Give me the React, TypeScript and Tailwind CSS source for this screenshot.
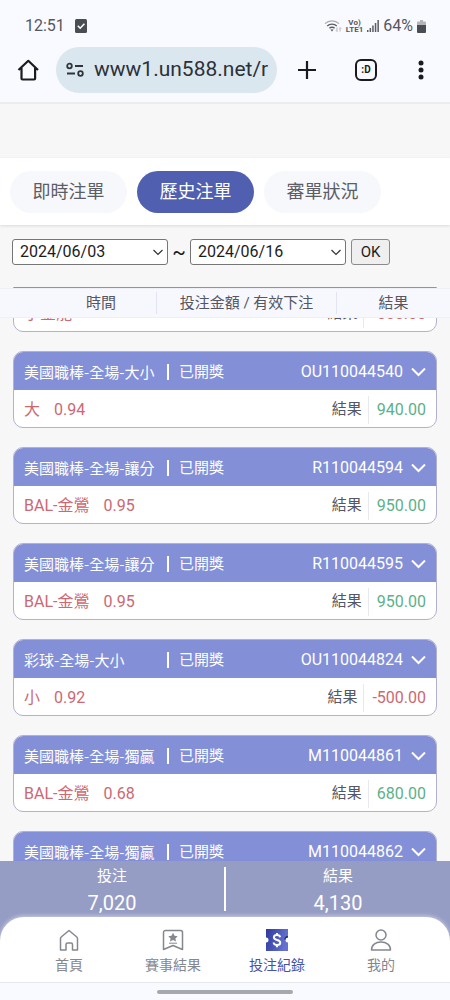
import { ReactNode, useState } from "react";

type Bet = { id: string; market: string; pick: string; odds: string; result: string };

const BETS: Bet[] = [
  { id: "R110044539", market: "美國職棒-全場-讓分", pick: "小金龍", odds: "", result: "-500.00" },
  { id: "OU110044540", market: "美國職棒-全場-大小", pick: "大", odds: "0.94", result: "940.00" },
  { id: "R110044594", market: "美國職棒-全場-讓分", pick: "BAL-金鶯", odds: "0.95", result: "950.00" },
  { id: "R110044595", market: "美國職棒-全場-讓分", pick: "BAL-金鶯", odds: "0.95", result: "950.00" },
  { id: "OU110044824", market: "彩球-全場-大小", pick: "小", odds: "0.92", result: "-500.00" },
  { id: "M110044861", market: "美國職棒-全場-獨贏", pick: "BAL-金鶯", odds: "0.68", result: "680.00" },
  { id: "M110044862", market: "美國職棒-全場-獨贏", pick: "BAL-金鶯", odds: "0.68", result: "680.00" },
];

const TABS = ["即時注單", "歷史注單", "審單狀況"];

export default function App() {
  return (
    <div className="h-screen flex flex-col overflow-hidden bg-[#f7f7f8] font-[Roboto,'Noto_Sans_CJK_TC',sans-serif] text-[#555762]">
      <header className="shrink-0 bg-[#f8faff] border-b-2 border-[#ececef]">
        <StatusBar />
        <BrowserBar />
      </header>
      <Tabs />
      <DateFilter />
      <BetList />
      <Summary />
      <BottomNav />
      <div className="shrink-0 h-[18px] flex items-center justify-center bg-[#f8faff] border-t border-[#e4e5ea]">
        <span className="w-[136px] h-1 rounded-full bg-[#a5a8ad]" />
      </div>
    </div>
  );
}

function StatusBar() {
  return (
    <div className="h-[46px] pt-1.5 pl-[25px] pr-6 flex items-center justify-between text-base text-[#55585e]">
      <div className="flex items-center gap-2.5">
        <span>12:51</span>
        <svg width="12" height="14" viewBox="0 0 12 14">
          <rect width="12" height="14" rx="1.5" fill="#4b4d55" />
          <path d="M2.8 6.8l2.4 2.4 4.2-4.4" fill="none" stroke="#fff" strokeWidth="1.6" />
        </svg>
      </div>
      <div className="flex items-center gap-1">
        <svg width="18" height="14" viewBox="0 0 18 14" fill="none" stroke="#5b5d63" strokeWidth="1.3">
          <path d="M1 4.6C4.8 1 11.2 1 15 4.6" stroke="#aaacb0" />
          <path d="M3.2 7c2.6-2.5 7-2.5 9.6 0M5.4 9.3c1.4-1.4 3.8-1.4 5.2 0" />
          <path d="M6.5 10.8L8 12.5l1.500-1.700C8.600 10 7.400 10 6.500 10.800z" fill="#5b5d63" stroke="none" />
          <path d="M13 8.500v4M11.800 11.300l1.200 1.200M16 12.500v-4M17.200 9.700L16 8.500" stroke="#b4b6ba" strokeWidth="1" />
        </svg>
        <span className="flex flex-col items-center text-[8px] leading-[7px] font-bold"><span>Vo)</span><span>LTE1</span></span>
        <svg width="12" height="12" viewBox="0 0 12 12" fill="#5b5d63">
          <path d="M0 10h1.500v2H0zM2.600 8h1.500v4H2.600zM5.200 5.500h1.500V12H5.200zM7.800 3h1.500v9H7.800zM10.400 0h1.500v12h-1.500z" />
        </svg>
        <span>64%</span>
        <svg width="9" height="13" viewBox="0 0 9 13">
          <path d="M3 0h3v1.500h2a1 1 0 011 1V6H0V2.500a1 1 0 011-1h2z" fill="#b3b5b9" />
          <path d="M0 5h9v7a1 1 0 01-1 1H1a1 1 0 01-1-1z" fill="#4b4d55" />
        </svg>
      </div>
    </div>
  );
}

function BrowserBar() {
  return (
    <div className="h-14 pb-2 pl-4 pr-[19px] flex items-center text-[#191b20]">
      <button aria-label="Home" className="w-6 mr-4">
        <svg width="24" height="24" viewBox="0 0 24 24" fill="none" stroke="currentColor" strokeWidth="2.2" strokeLinejoin="round">
          <path d="M2.500 12L12.300 2.800 22 12M5.500 10v10.500a1 1 0 001 1h11.600a1 1 0 001-1V10" />
        </svg>
      </button>
      <label className="flex-1 min-w-0 h-[46px] pl-2.5 pr-1.5 flex items-center gap-2.5 rounded-full bg-[#dae7ef]">
        <svg className="shrink-0" width="18" height="16" viewBox="0 0 18 16" fill="none" stroke="#30343a" strokeWidth="1.8">
          <circle cx="3.500" cy="4" r="2.300" />
          <path d="M9 4h8M1 11.500h8" />
          <circle cx="14.500" cy="11.500" r="2.300" />
        </svg>
        <input aria-label="Address" defaultValue="www1.un588.net/r" className="min-w-0 w-full text-[21px] outline-none text-[#2c3138] bg-transparent" />
      </label>
      <button aria-label="New tab" className="ml-5">
        <svg width="20" height="20" viewBox="0 0 20 20" stroke="currentColor" strokeWidth="2.2"><path d="M10 1v18M1 10h18" /></svg>
      </button>
      <button className="ml-[38px] w-[22px] h-[22px] rounded-[6px] border-2 border-current text-[10px] leading-none font-bold">:D</button>
      <button aria-label="Menu" className="ml-[34px] w-5 flex justify-center">
        <svg width="6" height="20" viewBox="0 0 6 20" fill="currentColor"><circle cx="3" cy="3" r="2.500" /><circle cx="3" cy="10" r="2.500" /><circle cx="3" cy="17" r="2.500" /></svg>
      </button>
    </div>
  );
}

function Tabs() {
  const [active, setActive] = useState(1);
  return (
    <nav className="shrink-0 mt-[54px] h-[67px] px-2.5 flex items-center gap-2.5 bg-white shadow-[0_1px_3px_rgba(0,0,0,0.12)]">
      {TABS.map((t, i) => (
        <button key={t} onClick={() => setActive(i)} className={`h-[42px] w-[117px] rounded-full text-lg ${i === active ? "bg-[#505fb0] text-white" : "bg-[#f7f8fc] text-[#5c5e66]"}`}>{t}</button>
      ))}
    </nav>
  );
}

function DateFilter() {
  return (
    <div className="shrink-0 mt-3.5 mb-[22px] px-3 flex items-center text-base text-[#1c1c1e]">
      <DateSelect label="開始日期" value="2024/06/03" />
      <span className="w-[22px] text-center text-xl leading-none">~</span>
      <DateSelect label="結束日期" value="2024/06/16" />
      <button className="ml-[5px] h-[26px] w-[39px] border border-[#8a8a8a] rounded-[3px] bg-[#efefef] text-[15px] leading-none">OK</button>
    </div>
  );
}

function DateSelect({ label, value }: { label: string; value: string }) {
  return (
    <div className="relative w-[156px]">
      <select aria-label={label} className="w-full h-[26px] pl-[7px] appearance-none bg-white border border-[#767676] rounded-[3px] text-base leading-none">
        <option>{value}</option>
      </select>
      <svg className="absolute right-[5px] top-2.5 pointer-events-none" width="10" height="7" viewBox="0 0 10 7" fill="none" stroke="#333" strokeWidth="1.2"><path d="M.5 1L5 5.500 9.500 1" /></svg>
    </div>
  );
}

function BetList() {
  return (
    <main className="relative flex-1 min-h-0 overflow-hidden">
      <div className="-mt-8 px-[13px] flex flex-col gap-[19px]">
        {BETS.map((b) => <BetCard key={b.id} bet={b} />)}
      </div>
      <div className="absolute inset-x-0 top-px h-[30px] flex items-center bg-[#f7f8fe] text-[15px] border-y border-[#eef0f6]">
        <span className="w-[157px] pl-[46px] text-center border-r border-[#e2e4f0]">時間</span>
        <span className="flex-1 text-center border-r border-[#e2e4f0]">投注金額 / 有效下注</span>
        <span className="w-[113px] text-center">結果</span>
      </div>
    </main>
  );
}

function BetCard({ bet }: { bet: Bet }) {
  const lost = bet.result.startsWith("-");
  return (
    <article className="shrink-0 h-[77px] rounded-[10px] border border-[#b1b2cc] bg-white overflow-hidden">
      <div className="h-[38px] pt-0.5 px-2.5 flex items-center bg-[#838fd7] text-white text-[15px]">
        <span className="w-[143px] whitespace-nowrap font-['Noto_Sans_CJK_TC',sans-serif]">{bet.market}</span>
        <span className="w-0.5 h-4 bg-white" />
        <span className="ml-2.5">已開獎</span>
        <span className="ml-auto text-base">{bet.id}</span>
        <svg className="ml-2" width="15" height="10" viewBox="0 0 15 10" fill="none" stroke="#fff" strokeWidth="2"><path d="M1 1.500l6.500 6.500L14 1.500" /></svg>
      </div>
      <div className="h-[37px] pt-0.5 px-2.5 flex items-center text-[15px]">
        <span className="text-base text-[#cc6872]">{bet.pick}</span>
        <span className="ml-3.5 text-base text-[#cc6872]">{bet.odds}</span>
        <span className="ml-auto">結果</span>
        <span className="ml-1.5 w-px h-7 bg-[#e8e8f0]" />
        <span className={`ml-2 text-base ${lost ? "text-[#cc6872]" : "text-[#5cb189]"}`}>{bet.result}</span>
      </div>
    </article>
  );
}

function Summary() {
  return (
    <div className="shrink-0 h-[88px] pt-1 -mb-8 flex items-start bg-[#969dc5] text-white text-center">
      <div className="flex-1"><div className="text-[15px] leading-[22px]">投注</div><div className="text-xl leading-8">7,020</div></div>
      <div className="w-0.5 h-[44px] mt-0.5 bg-white" />
      <div className="flex-1"><div className="text-[15px] leading-[22px]">結果</div><div className="text-xl leading-8">4,130</div></div>
    </div>
  );
}

function BottomNav() {
  return (
    <nav className="relative shrink-0 h-[65px] px-[17px] flex rounded-t-[24px] bg-white shadow-[0_-1px_4px_rgba(255,255,255,0.5)]">
      <NavItem label="首頁">
        <path d="M2.500 9.500a2 2 0 01.7-1.500L11 1.500 18.800 8a2 2 0 01.7 1.500V21h-5v-5.500a1.500 1.500 0 00-1.500-1.500H9.500A1.500 1.500 0 008 15.500V21H2.500z" />
      </NavItem>
      <NavItem label="賽事結果">
        <path d="M1.500 3.500a2 2 0 012-2h15a2 2 0 012 2v17L11 16.500 1.500 20.500z" />
        <path d="M11 3.800l1.500 2.900 3.200.5-2.300 2.200.6 3.100-3-1.400-3 1.400.6-3.100-2.300-2.200 3.200-.5z" fill="currentColor" stroke="none" />
        <path d="M7 14.200h8" strokeWidth="1" />
      </NavItem>
      <NavItem label="投注紀錄" active>
        <defs>
          <linearGradient id="ticket" x1="0" y1="0" x2="1" y2="0.3">
            <stop offset="0" stopColor="#2d3a9c" />
            <stop offset="1" stopColor="#6572d0" />
          </linearGradient>
        </defs>
        <path d="M0 0h22v8.500a2.500 2.500 0 000 5V22H0v-8.500a2.500 2.500 0 000-5z" fill="url(#ticket)" stroke="none" />
        <path d="M22 8.500a2.500 2.500 0 00-2.500 2.500L18 10l2-3h2z" fill="#28337f" stroke="none" />
        <path d="M14.200 8.300c-.3-1.400-1.500-2.200-3.200-2.200s-3.100.9-3.100 2.400c0 3.300 6.400 1.500 6.400 5 0 1.600-1.400 2.500-3.300 2.500s-3.200-.9-3.400-2.500M11 4v2M11 16v2.200" stroke="#fff" strokeWidth="2" />
      </NavItem>
      <NavItem label="我的">
        <circle cx="11" cy="6" r="5" />
        <path d="M1.500 21c0-5 4-8 9.500-8s9.500 3 9.500 8z" />
      </NavItem>
    </nav>
  );
}

function NavItem({ label, active, children }: { label: string; active?: boolean; children: ReactNode }) {
  return (
    <a href="#" className={`flex-1 pt-3 flex flex-col items-center text-sm ${active ? "text-[#4652a8]" : "text-[#85878f]"}`}>
      <svg width="22" height="22" viewBox="0 0 22 22" fill="none" stroke="currentColor" strokeWidth="1.5" strokeLinejoin="round">{children}</svg>
      <span className="mt-1 leading-5">{label}</span>
    </a>
  );
}
